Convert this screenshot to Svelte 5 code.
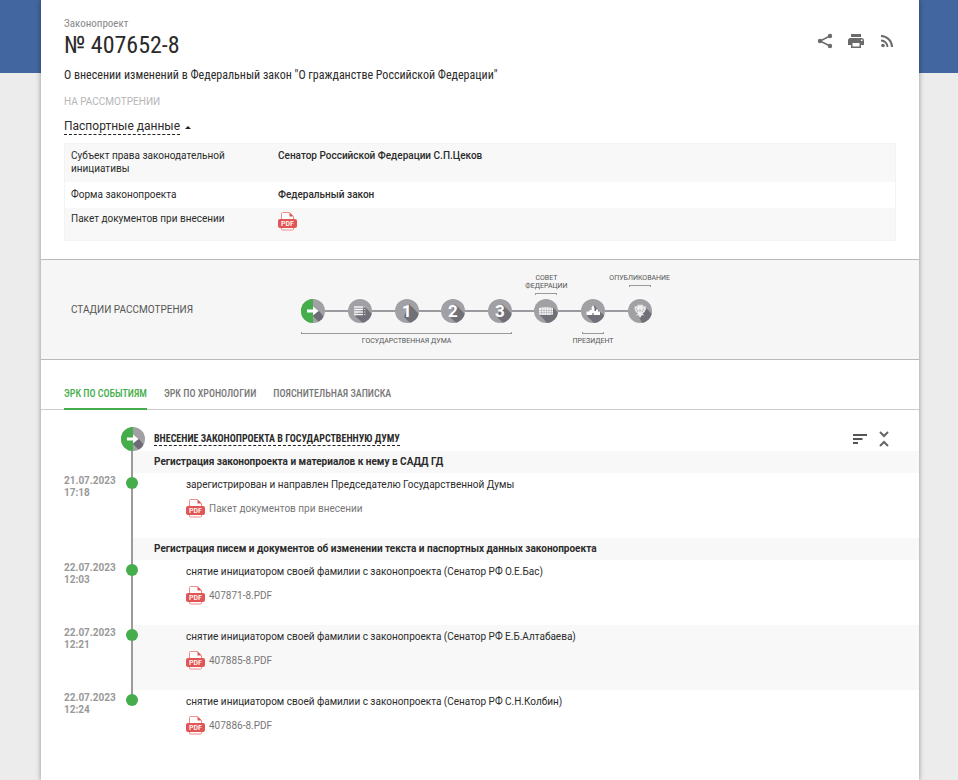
<script>
  const passport = [
    { name: 'Субъект права законодательной инициативы', value: 'Сенатор Российской Федерации С.П.Цеков' },
    { name: 'Форма законопроекта', value: 'Федеральный закон' },
    { name: 'Пакет документов при внесении', pdf: true }
  ]

  const stages = ['arrow', 'list', '1', '2', '3', 'council', 'kremlin', 'eagle']

  const tabs = ['ЭРК по событиям', 'ЭРК по хронологии', 'Пояснительная записка']

  const groups = [
    {
      title: 'Регистрация законопроекта и материалов к нему в САДД ГД',
      events: [
        { date: '21.07.2023', time: '17:18', text: 'зарегистрирован и направлен Председателю Государственной Думы', file: 'Пакет документов при внесении' }
      ]
    },
    {
      title: 'Регистрация писем и документов об изменении текста и паспортных данных законопроекта',
      events: [
        { date: '22.07.2023', time: '12:03', text: 'снятие инициатором своей фамилии с законопроекта (Сенатор РФ О.Е.Бас)', file: '407871-8.PDF' },
        { date: '22.07.2023', time: '12:21', text: 'снятие инициатором своей фамилии с законопроекта (Сенатор РФ Е.Б.Алтабаева)', file: '407885-8.PDF' },
        { date: '22.07.2023', time: '12:24', text: 'снятие инициатором своей фамилии с законопроекта (Сенатор РФ С.Н.Колбин)', file: '407886-8.PDF' }
      ]
    }
  ]

  let active = $state(0)
  let open = $state(true)
</script>


{#snippet pdf()}
  <svg class="pdf" viewBox="0 0 19 19" aria-hidden="true">
    <path d="M3.500 8V1.500q0-1 1-1h7l4 4V8" fill="#fff" stroke="#ef8a8a" />
    <path d="M11.500 0.500v4h4z" fill="#e25555" />
    <path d="M3.500 14v3q0 1 1 1h10q1 0 1-1v-3" fill="#fff" stroke="#ef8a8a" />
    <rect y="7" width="19" height="9" rx="2" fill="#e25555" />
    <text x="9.500" y="14" text-anchor="middle">PDF</text>
  </svg>
{/snippet}

{#snippet stage(kind)}
  <svg class="stage" viewBox="0 0 24 24" aria-hidden="true">
    <rect width="24" height="24" fill="#a0a0a5" />
    {#if kind === 'arrow'}
      <rect width="12" height="24" fill="#45ad4b" />
      <path d="M12 14l6-2 4 5v3l-4 3-6-6z" fill="#6c6b76" />
      <path d="M6 10.500h6V7.500l5.500 4.500-5.500 4.500v-3H6z" fill="#fff" />
    {:else if kind === 'list'}
      <path d="M17 8l7 7v9H15l-8-7z" fill="#707078" />
      <path d="M6 8h9M6 10.500h9M6 13h9M6 15.500h9" stroke="#f2f2f2" stroke-width="1.300" />
      <path d="M16 8h1.500M16 10.500h1.500M16 13h1.500M16 15.500h1.500" stroke="#ccc" />
    {:else if kind === 'council'}
      <path d="M19 8.500l5 5V24H13l-7-8z" fill="#707078" />
      <path d="M5 9q7-1.500 14 0v6.500q-7 1-14 0z" fill="#f4f4f4" />
      <path d="M5 11.500h14M5 13.500h14M7.500 9v7M10 9v7M12.500 9v7M15 9v7M17.500 9v7" stroke="#a5a5aa" stroke-width="0.500" />
    {:else if kind === 'kremlin'}
      <path d="M13 6l5 6 6 5v7H13l-7-7z" fill="#707078" />
      <path d="M5.500 16v-3.500h3V11h2V9l1.500-3 1.500 3v3h1.500v-1.500h2v2h2V16z" fill="#fff" />
      <path d="M11 16v-2h2v2z" fill="#a5a5aa" />
    {:else if kind === 'eagle'}
      <path d="M17 8l7 7v9H14l-3-6z" fill="#707078" />
      <path d="M12 5l1 1.500 1-1 1.500 1-1 1.500 3-1 .5 3-1.500 3-2 1.500 2 2-2.500-.5L12 19l-1.500-3-2.500.5 2-2L8 13l-1.500-3L7 7l3 1-1-1.500 1.500-1 1 1z" fill="#eee" />
      <path d="M8 9l2 4M16 9l-2 4" stroke="#9c9ca1" stroke-width="0.700" />
      <circle cx="12" cy="11.500" r="1" fill="#b5b5b9" />
    {:else}
      <path d="M14 5l10 10v9H15l-6-6z" fill="#707078" />
      <text x="12" y="18" text-anchor="middle">{kind}</text>
    {/if}
  </svg>
{/snippet}


<div class="backdrop">
  <main>
    <header>
      <div class="top">
        <div>
          <p class="kind">Законопроект</p>
          <h1>№ 407652-8</h1>
        </div>
        <div class="tools">
          <button aria-label="Поделиться">
            <svg viewBox="0 0 16 16">
              <path d="M13 3L3 8l10 5" fill="none" stroke="#6b6b6b" stroke-width="1.500" />
              <circle cx="13" cy="3" r="2.200" /><circle cx="3" cy="8" r="2.200" /><circle cx="13" cy="13" r="2.200" />
            </svg>
          </button>
          <button aria-label="Печать">
            <svg viewBox="0 0 16 16">
              <path d="M3 1h10v3H3zM2.500 5h11A2.500 2.500 0 0 1 16 7.500V12h-3v3H3v-3H0V7.500A2.500 2.500 0 0 1 2.500 5zM4.500 10v3.500h7V10zM13 6.500v1.500h1.500V6.500z" fill-rule="evenodd" />
            </svg>
          </button>
          <button aria-label="RSS">
            <svg viewBox="0 0 16 16">
              <circle cx="4" cy="12.500" r="1.800" />
              <path d="M2 7.500a6.500 6.500 0 0 1 6.500 6.500M2 3a11 11 0 0 1 11 11" fill="none" stroke="#6b6b6b" stroke-width="2" />
            </svg>
          </button>
        </div>
      </div>

      <p class="subject">О внесении изменений в Федеральный закон "О гражданстве Российской Федерации"</p>
      <p class="status">НА РАССМОТРЕНИИ</p>
      <button class="toggle" onclick={() => open = !open}><span>Паспортные данные</span><i class:closed={!open}></i></button>

      {#if open}
        <table>
          <tbody>
            {#each passport as row}
              <tr>
                <th scope="row">{row.name}</th>
                <td>
                  {#if row.pdf}
                    <a href="#package" aria-label="Пакет документов, PDF">{@render pdf()}</a>
                  {:else}
                    {row.value}
                  {/if}
                </td>
              </tr>
            {/each}
          </tbody>
        </table>
      {/if}
    </header>

    <section class="stages">
      <h2>СТАДИИ РАССМОТРЕНИЯ</h2>
      <div class="track">
        <div class="label above council">СОВЕТ<br>ФЕДЕРАЦИИ<i></i></div>
        <div class="label above publish">ОПУБЛИКОВАНИЕ<i></i></div>
        {#each stages as kind}
          <div class="step">{@render stage(kind)}</div>
        {/each}
        <div class="label below duma"><i></i>ГОСУДАРСТВЕННАЯ ДУМА</div>
        <div class="label below president"><i></i>ПРЕЗИДЕНТ</div>
      </div>
    </section>

    <nav>
      {#each tabs as tab, i}
        <button class:active={active === i} onclick={() => active = i}>{tab}</button>
      {/each}
    </nav>

    <section class="history">
      <div class="phase">
        {@render stage('arrow')}
        <a href="#phase">ВНЕСЕНИЕ ЗАКОНОПРОЕКТА В ГОСУДАРСТВЕННУЮ ДУМУ</a>
        <div class="tools">
          <button aria-label="Сортировка">
            <svg viewBox="0 0 16 16"><path d="M1 4h14M1 8h9.500M1 12h5" stroke="#555" stroke-width="2" /></svg>
          </button>
          <button aria-label="Свернуть">
            <svg viewBox="0 0 16 16"><path d="M4 1l4 4 4-4M4 15l4-4 4 4" fill="none" stroke="#666" stroke-width="2" /></svg>
          </button>
        </div>
      </div>

      {#each groups as group}
        <h3>{group.title}</h3>
        {#each group.events as event, i}
          <article class:odd={i % 2 === 1}>
            <time>{event.date}<br>{event.time}</time>
            <div class="event">
              <p>{event.text}</p>
              <a href="#file">{@render pdf()}{event.file}</a>
            </div>
          </article>
        {/each}
      {/each}
    </section>
  </main>
</div>


<style>

  :global(body) {
    margin: 0;
  }

  .backdrop {
    display: flow-root;
    min-height: 100vh;
    background: linear-gradient(#42669f 73px, #ececec 73px);
    font: 10px/13px Roboto, "Noto Sans", sans-serif;
    color: #2b2b2b;
  }

  main {
    box-sizing: border-box;
    min-height: 100vh;
    margin: 0 39px 0 41px;
    background: #fff;
    box-shadow: 0 0 5px rgba(0, 0, 0, .4);
  }

  p, h1, h2, h3 {
    margin: 0;
  }

  button {
    padding: 0;
    border: 0;
    background: none;
    font: inherit;
    color: inherit;
    cursor: pointer;
  }

  a {
    color: inherit;
    text-decoration: none;
  }

  svg {
    display: block;
    flex: none;
  }

  header {
    padding: 17px 23px 18px;
  }

  .top {
    display: flex;
    justify-content: space-between;
    align-items: flex-end;
  }

  .kind, h1, .subject, nav, .phase {
    font-family: "Roboto Condensed", "Liberation Sans Narrow", Roboto, sans-serif;
  }

  .kind {
    font-size: 11px;
    line-height: 13px;
    color: #888;
  }

  h1 {
    font-size: 24px;
    line-height: 30px;
    font-weight: 400;
  }

  .tools {
    display: flex;
    gap: 15px;
  }

  .tools svg {
    width: 16px;
    height: 16px;
    fill: #6b6b6b;
  }

  .top .tools {
    padding: 0 1px 11px;
  }

  .subject {
    margin-top: 7px;
    font-size: 12px;
    line-height: 16px;
  }

  .status {
    margin-top: 12px;
    color: #b5b5b5;
  }

  .toggle {
    display: flex;
    align-items: center;
    gap: 5px;
    margin-top: 11px;
    font-size: 12px;
    line-height: 15px;
  }

  .toggle span {
    border-bottom: 1px dashed #222;
  }

  .toggle i {
    border: 3px solid transparent;
    border-top: 0;
    border-bottom-color: #222;
  }

  .closed {
    transform: rotate(180deg);
  }

  table {
    width: 100%;
    margin-top: 8px;
    border-collapse: collapse;
    outline: 1px solid #f3f3f3;
    outline-offset: -1px;
  }

  tr:nth-child(odd) {
    background: #f8f8f8;
  }

  th, td {
    padding: 6px 7px 7px;
    vertical-align: top;
    text-align: left;
  }

  th {
    width: 194px;
    padding-right: 13px;
    font-weight: 400;
  }

  td {
    padding-left: 0;
    font-weight: 500;
  }

  tr:last-child th, tr:last-child td {
    padding-top: 4px;
    padding-bottom: 10px;
  }

  .pdf {
    width: 19px;
    height: 19px;
  }

  .pdf text {
    font: 500 8px "Roboto Condensed", Roboto, sans-serif;
    fill: #fff;
  }

  .stages {
    display: flex;
    align-items: center;
    height: 99px;
    padding: 0 30px;
    border: 1px solid #bbb;
    border-width: 1px 0;
    background: #f6f6f6;
  }

  h2 {
    flex: none;
    width: 219px;
    font-size: 10px;
    font-weight: 400;
    color: #555;
  }

  .track {
    display: grid;
    grid-template-columns: repeat(8, minmax(0, 1fr));
    grid-template-rows: 28px 24px 26px;
    row-gap: 4px;
    flex: 0 1 373px;
  }

  .step {
    display: flex;
    align-items: center;
    grid-row: 2;
  }

  .step::before, .step::after {
    content: '';
    flex: 1;
    height: 2px;
    background: #9b9b9f;
  }

  .step:nth-child(3)::before, .step:nth-child(10)::after {
    background: none;
  }

  .stage {
    width: 24px;
    height: 24px;
    border-radius: 50%;
  }

  .stage text {
    font: 700 17px Roboto, sans-serif;
    fill: #fff;
  }

  .label {
    display: flex;
    flex-direction: column;
    align-items: center;
    font-size: 7px;
    line-height: 8px;
    text-align: center;
    white-space: nowrap;
    color: #555;
  }

  .label i {
    width: 20px;
    height: 1px;
    border: 1px solid #999;
  }

  .above {
    grid-row: 1;
    padding-top: 7px;
  }

  .above i {
    margin-top: 3px;
    border-bottom: 0;
  }

  .below {
    grid-row: 3;
  }

  .below i {
    margin: 5px 0 3px;
    border-top: 0;
  }

  .council {
    grid-column: 6;
  }

  .publish {
    grid-column: 8;
  }

  .duma {
    grid-column: 1 / 6;
  }

  .duma i {
    width: 209px;
  }

  .president {
    grid-column: 7;
  }

  nav {
    display: flex;
    gap: 17px;
    margin-top: 22px;
    padding: 0 23px;
    border-bottom: 1px solid #ccc;
    font-size: 10px;
    font-weight: 500;
    line-height: 24px;
    color: #777;
  }

  nav button {
    margin-bottom: -1px;
    padding-bottom: 2px;
    border-bottom: 2px solid transparent;
    text-transform: uppercase;
  }

  nav .active {
    border-color: #45ad4b;
    color: #45ad4b;
  }

  .phase {
    display: flex;
    align-items: center;
    gap: 9px;
    padding: 17px 27px 0 80px;
    font-size: 10px;
    font-weight: 700;
  }

  .phase a {
    border-bottom: 1px dashed #222;
  }

  .phase .tools {
    gap: 8px;
    margin-left: auto;
  }

  h3 {
    margin-left: 90px;
    padding: 0 0 1px 21px;
    border-left: 2px solid #9b9b9b;
    background: #f8f8f8;
    font-size: 10px;
    line-height: 21px;
    font-weight: 700;
  }

  article {
    position: relative;
    display: flex;
  }

  article::before {
    content: '';
    position: absolute;
    top: 4px;
    left: 85px;
    width: 12px;
    height: 12px;
    border-radius: 50%;
    background: #45ad4b;
  }

  time {
    flex: none;
    box-sizing: border-box;
    width: 90px;
    padding: 2px 0 0 23px;
    line-height: 12px;
    font-weight: 700;
    color: #999;
  }

  .event {
    flex: 1;
    box-sizing: border-box;
    min-height: 65px;
    padding: 5px 20px 19px 53px;
    border-left: 2px solid #9b9b9b;
  }

  article:last-child .event {
    border-image: linear-gradient(#9b9b9b 10px, transparent 10px) 1;
  }

  .odd .event {
    background: #f8f8f8;
  }

  .event a {
    display: flex;
    align-items: center;
    gap: 4px;
    margin-top: 8px;
    color: #777;
  }

</style>
